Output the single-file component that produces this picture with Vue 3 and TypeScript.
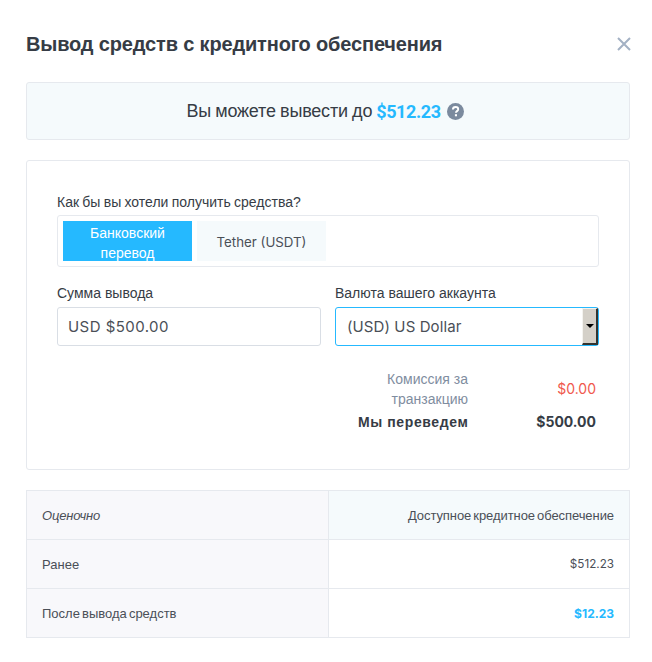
<script setup lang="ts">
const rows: { label: string; value: string; strong: boolean }[] = [
  { label: 'Ранее', value: '$512.23', strong: false },
  { label: 'После вывода средств', value: '$12.23', strong: true },
]
</script>

<template>
  <div class="modal">
    <header class="head">
      <h1 class="title">Вывод средств с кредитного обеспечения</h1>
      <svg class="close" width="14" height="14" viewBox="0 0 14 14" aria-label="close">
        <path d="M1 1 13 13M13 1 1 13" stroke="#a3b1c4" stroke-width="2" fill="none" />
      </svg>
    </header>

    <section class="banner">
      <span class="banner-text">Вы можете вывести до</span>
      <b class="amount">$512.23</b>
      <svg class="help" width="17" height="17" viewBox="0 0 17 17">
        <circle cx="8.5" cy="8.5" r="8.5" fill="#7b8a9e" />
        <path d="M5.9 6.5c0-1.6 1.2-2.5 2.7-2.5s2.6.9 2.6 2.2c0 1.9-2.3 1.9-2.3 3.5" stroke="#fff" stroke-width="1.9" fill="none" />
        <rect x="7.9" y="11.2" width="2.1" height="2.1" fill="#fff" />
      </svg>
    </section>

    <section class="panel">
      <div class="field-label first">Как бы вы хотели получить средства?</div>
      <div class="tabs">
        <div class="tab active">Банковский перевод</div>
        <div class="tab">Tether (USDT)</div>
      </div>

      <div class="fields">
        <label class="field">
          <span class="field-label">Сумма вывода</span>
          <input class="control" type="text" value="USD $500.00" />
        </label>
        <label class="field">
          <span class="field-label">Валюта вашего аккаунта</span>
          <span class="select-wrap">
            <select class="control focused">
              <option>(USD) US Dollar</option>
            </select>
            <span class="select-btn"><i class="arrow"></i></span>
          </span>
        </label>
      </div>

      <div class="summary">
        <div class="sum-row">
          <span class="sum-label muted">Комиссия за транзакцию</span>
          <span class="sum-value red">$0.00</span>
        </div>
        <div class="sum-row bold">
          <span class="sum-label">Мы переведем</span>
          <span class="sum-value">$500.00</span>
        </div>
      </div>
    </section>

    <table class="table">
      <tbody>
        <tr>
          <th class="left"><em>Оценочно</em></th>
          <th class="right head-right">Доступное кредитное обеспечение</th>
        </tr>
        <tr v-for="row in rows" :key="row.label">
          <td class="left">{{ row.label }}</td>
          <td class="right" :class="row.strong ? 'strong' : 'plain'">{{ row.value }}</td>
        </tr>
      </tbody>
    </table>
  </div>
</template>

<style scoped>
.modal {
  box-sizing: border-box;
  width: 652px;
  height: 662px;
  padding: 0 22px 0 26px;
  background: #fff;
  color: #363c45;
  font-family: "Liberation Sans", Roboto, sans-serif;
  overflow: hidden;
}
.head {
  display: flex;
  align-items: center;
  justify-content: space-between;
  height: 82px;
  padding-top: 5px;
  box-sizing: border-box;
}
.title {
  margin: 0;
  font-size: 20px;
  font-weight: 700;
  line-height: 24px;
  letter-spacing: -0.16px;
  color: #363c45;
}
.close {
  margin-right: -1px;
}
.banner {
  box-sizing: border-box;
  width: 604px;
  height: 58px;
  padding-right: 6px;
  display: flex;
  align-items: center;
  justify-content: center;
  gap: 4px;
  background: #f5fafc;
  border: 1px solid #e6e9ee;
  border-radius: 3px;
  font-size: 18px;
}
.banner-text {
  letter-spacing: -0.2px;
  word-spacing: -0.5px;
}
.amount {
  color: #25b9ff;
  font-family: Roboto, sans-serif;
  font-weight: 700;
  font-size: 18px;
  letter-spacing: -0.4px;
}
.help {
  margin-left: 2px;
}
.panel {
  box-sizing: border-box;
  width: 604px;
  height: 310px;
  margin-top: 20px;
  padding: 29px 30px 0;
  border: 1px solid #e6e9ee;
  border-radius: 3px;
}
.field-label {
  display: block;
  font-size: 14px;
  line-height: 24px;
  color: #363c45;
}
.first {
  margin-bottom: 1px;
  word-spacing: -0.6px;
}
.tabs {
  box-sizing: border-box;
  display: flex;
  gap: 5px;
  height: 52px;
  padding: 5px;
  border: 1px solid #e6e9ee;
  border-radius: 3px;
}
.tab {
  box-sizing: border-box;
  width: 129px;
  height: 40px;
  display: flex;
  align-items: center;
  justify-content: center;
  padding: 2px 10px 0;
  text-align: center;
  font-size: 13.3px;
  line-height: 20px;
  font-family: Inter, Roboto, sans-serif;
  background: #f5fafc;
  color: #4a4f57;
}
.tab.active {
  background: #25b9ff;
  color: #fff;
  font-family: "Liberation Sans", sans-serif;
  font-size: 14px;
  padding-top: 3px;
}
.fields {
  display: flex;
  gap: 14px;
  margin-top: 14px;
}
.field {
  display: block;
  width: 264px;
}
.field .field-label {
  margin-bottom: 2px;
}
.control {
  box-sizing: border-box;
  display: block;
  width: 100%;
  height: 39px;
  padding: 0 10px;
  border: 1px solid #d9dee5;
  border-radius: 3px;
  background: #fff;
  color: #4a4f57;
  font-family: Inter, Roboto, sans-serif;
  font-size: 15px;
  letter-spacing: 0.45px;
  outline: none;
}
.select-wrap {
  position: relative;
  display: block;
}
select.control {
  appearance: none;
  padding-left: 11px;
  letter-spacing: 0.1px;
}
.focused {
  border-color: #25b9ff;
}
.select-btn {
  position: absolute;
  top: 1px;
  right: 1px;
  bottom: 1px;
  width: 16px;
  box-sizing: border-box;
  display: flex;
  align-items: center;
  justify-content: center;
  background: #d4d0c8;
  border-style: solid;
  border-width: 1px 2px 2px 1px;
  border-color: #f4f3ef #33332f #33332f #f4f3ef;
}
.arrow {
  width: 0;
  height: 0;
  border-left: 4px solid transparent;
  border-right: 4px solid transparent;
  border-top: 4px solid #000;
}
.summary {
  margin-top: 20px;
  margin-right: 3px;
}
.sum-row {
  display: flex;
  justify-content: flex-end;
  align-items: center;
  font-size: 14px;
  line-height: 20px;
  padding: 3px 0;
}
.sum-row + .sum-row {
  padding-top: 0;
}
.sum-label {
  width: 110px;
  text-align: right;
}
.sum-value {
  width: 128px;
  text-align: right;
  font-family: Inter, Roboto, sans-serif;
  font-size: 14px;
}
.muted {
  color: #7f8da0;
}
.red {
  color: #f0584d;
}
.bold {
  font-weight: 700;
}
.bold .sum-label {
  white-space: nowrap;
  letter-spacing: 0.6px;
}
.table {
  width: 604px;
  margin-top: 20px;
  border-collapse: collapse;
  table-layout: fixed;
  font-size: 13px;
}
.table th,
.table td {
  box-sizing: border-box;
  height: 49px;
  padding: 0 15px;
  border: 1px solid #e6e9ee;
  font-weight: 400;
  color: #4a4f57;
}
.table .left {
  width: 302px;
  text-align: left;
  background: #f8f8fb;
  word-spacing: -1.5px;
}
.table .left em {
  letter-spacing: -0.2px;
}
.table .right {
  text-align: right;
}
.table .head-right {
  background: #f5fafc;
  word-spacing: -1.5px;
  letter-spacing: -0.07px;
}
.table td.plain {
  font-family: Inter, Roboto, sans-serif;
  font-size: 11.7px;
}
.table td.strong {
  font-weight: 700;
  color: #25b9ff;
  font-family: Inter, Roboto, sans-serif;
  font-size: 12px;
}
</style>
